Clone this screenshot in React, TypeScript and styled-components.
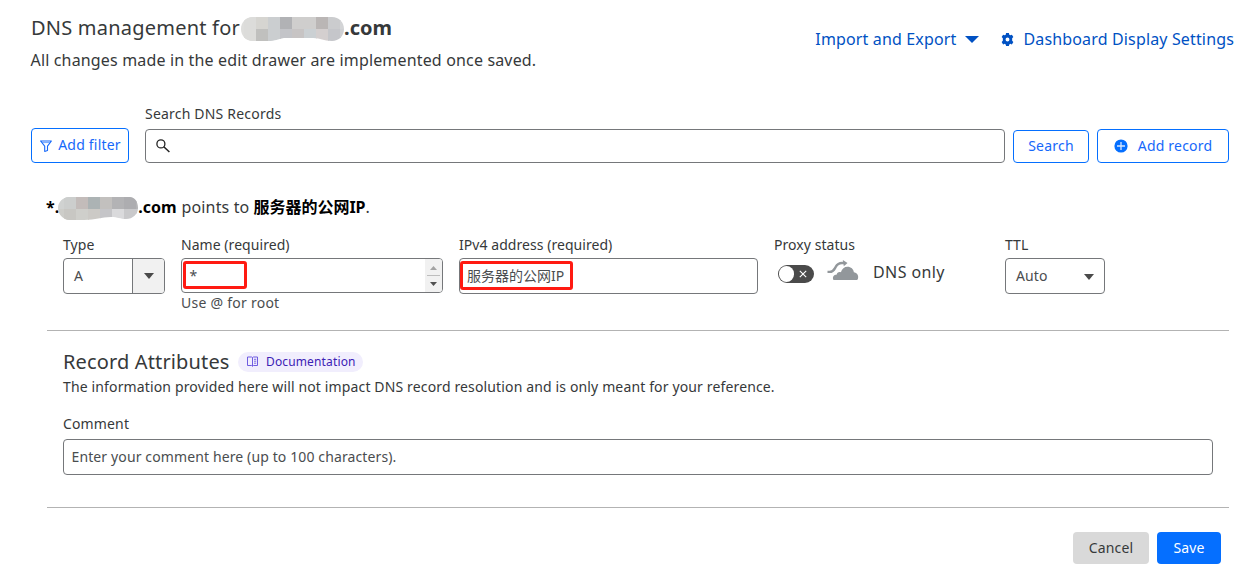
import React from "react";
import styled, { createGlobalStyle } from "styled-components";

const GlobalStyle = createGlobalStyle`
  *, *::before, *::after { box-sizing: border-box; }
  body {
    margin: 0;
    background: #fff;
    color: #36393a;
    font: 14px/20px "Noto Sans", "Noto Sans CJK SC", sans-serif;
    letter-spacing: 0.14px;
    white-space: nowrap;
    overflow: hidden;
  }
  svg { display: block; flex: none; }
`;

const Page = styled.main`
  width: 1258px;
  height: 570px;
  padding: 14px 24px 0 30px;
`;

const Header = styled.header`
  display: flex;
  justify-content: space-between;
  height: 90px;
`;

const Title = styled.h1`
  display: flex;
  align-items: center;
  margin: 0;
  padding-left: 1px;
  height: 28px;
  font-size: 20px;
  line-height: 28px;
  font-weight: 400;
  letter-spacing: 0.22px;
  strong { letter-spacing: 0; }
  svg { margin: 2px 0 0 1px; }
`;

const Subtitle = styled.p`
  margin: 6px 0 0;
  padding-left: 0.5px;
  font-size: 16px;
  line-height: 24px;
  letter-spacing: 0.16px;
`;

const HeaderLinks = styled.nav`
  display: flex;
  align-items: center;
  height: 24px;
  margin-top: 13px;
`;

const HeaderLink = styled.a<{ $gap: number }>`
  display: flex;
  align-items: center;
  gap: ${(p) => p.$gap}px;
  color: #0051c3;
  font-size: 16px;
  line-height: 24px;
  letter-spacing: 0.15px;
  & + & { margin-left: 22px; }
`;

const SearchRow = styled.section`
  display: flex;
  align-items: flex-end;
  height: 59px;
  padding-left: 1px;
`;

const OutlineButton = styled.button<{ $w: number; $h: number; $gap?: number }>`
  display: flex;
  align-items: center;
  justify-content: center;
  gap: ${(p) => p.$gap ?? 0}px;
  width: ${(p) => p.$w}px;
  height: ${(p) => p.$h}px;
  padding: 0;
  border: 1px solid #056fff;
  border-radius: 4px;
  background: #fff;
  color: #1668fa;
  font: inherit;
  letter-spacing: 0.2px;
`;

const FilterButton = styled(OutlineButton)`
  padding: 0 0 2px 1px;
  svg { margin-top: 3px; }
`;

const SearchButton = styled(OutlineButton)`
  padding-bottom: 2px;
`;

const AddButton = styled(OutlineButton)`
  margin-left: 8px;
`;

const SearchField = styled.label`
  display: flex;
  flex-direction: column;
  width: 860px;
  margin: 0 8px 0 16px;
  letter-spacing: 0.2px;
`;

const Box = styled.div<{ $w?: number; $h?: number; $pad?: number }>`
  position: relative;
  display: flex;
  align-items: center;
  width: ${(p) => (p.$w ? `${p.$w}px` : "100%")};
  height: ${(p) => p.$h ?? 36}px;
  padding-left: ${(p) => p.$pad ?? 7.5}px;
  border: 1px solid #75777a;
  border-radius: 4px;
  background: #fff;
  color: #4a4d4f;
  letter-spacing: 0.12px;
  overflow: hidden;
`;

const AddressBox = styled(Box)`
  letter-spacing: 0;
`;

const SearchBox = styled(Box)`
  margin-top: 5px;
`;

const Card = styled.section`
  width: 1182px;
  margin: 32px 0 0 17px;
`;

const Summary = styled.p`
  display: flex;
  align-items: center;
  height: 24px;
  margin: 0 0 0 -1px;
  font-size: 16px;
  line-height: 24px;
  strong { color: #000; letter-spacing: 0; }
  svg { margin: 2px 0 0 -1px; }
`;

const PointsTo = styled.span`
  margin: 0 4px 0 5px;
`;

const Fields = styled.div`
  display: flex;
  height: 96px;
  padding: 16px 0 0 16px;
`;

const Field = styled.div<{ $w: number; $gap?: number }>`
  display: flex;
  flex-direction: column;
  width: ${(p) => p.$w}px;
  margin-right: ${(p) => p.$gap ?? 16}px;
`;

const Label = styled.span`
  height: 23px;
  line-height: 20px;
  letter-spacing: 0.05px;
`;

const SelectArrow = styled.span`
  display: flex;
  align-items: center;
  justify-content: center;
  width: 32px;
  height: 100%;
  margin-left: auto;
  border-left: 1px solid #75777a;
  background: #f1f1f1;
`;

const PlainArrow = styled.span`
  margin: 2px 10px 0 auto;
`;

const Spinner = styled.span`
  display: flex;
  flex-direction: column;
  align-items: center;
  width: 17px;
  height: 100%;
  margin-left: auto;
  background: #f1f1f1;
`;

const SpinHalf = styled.span<{ $top?: boolean }>`
  display: flex;
  align-items: center;
  justify-content: center;
  width: 13px;
  height: 17px;
  padding-top: ${(p) => (p.$top ? 2 : 0)}px;
  border-bottom: ${(p) => (p.$top ? "1px solid #bdbdbd" : "0")};
`;

const Highlight = styled.span<{ $x: number; $y: number; $w: number; $h: number }>`
  position: absolute;
  left: ${(p) => p.$x}px;
  top: ${(p) => p.$y}px;
  width: ${(p) => p.$w}px;
  height: ${(p) => p.$h}px;
  border: 3px solid #ff1a12;
  border-radius: 3px;
`;

const Hint = styled.span`
  color: #4a4d4f;
  letter-spacing: 0.25px;
`;

const ProxyRow = styled.div`
  display: flex;
  align-items: center;
  height: 28px;
  padding-left: 4px;
  font-size: 16px;
  letter-spacing: 0.4px;
`;

const Toggle = styled.span`
  display: flex;
  align-items: center;
  justify-content: space-between;
  width: 36px;
  height: 18px;
  margin: 3px 13px 0 0;
  padding: 0 7px 0 1px;
  border-radius: 9px;
  background: #4a4a4a;
`;

const Knob = styled.span`
  width: 15px;
  height: 16px;
  border-radius: 8px;
  background: #fff;
`;

const ProxyLabel = styled.span`
  margin-left: 14px;
`;

const Divider = styled.hr`
  height: 1px;
  margin: 0;
  border: 0;
  background: #b3b3b3;
`;

const FieldsDivider = styled(Divider)`
  margin-top: 15px;
`;

const Attributes = styled.div`
  height: 176px;
  padding: 17px 16px 0;
`;

const AttributesHead = styled.div`
  display: flex;
  align-items: center;
  height: 28px;
`;

const SectionTitle = styled.h2`
  margin: 0;
  width: 175px;
  font-size: 20px;
  line-height: 28px;
  font-weight: 400;
`;

const DocPill = styled.a`
  display: flex;
  align-items: center;
  gap: 8px;
  width: 125px;
  height: 20px;
  margin-bottom: 1px;
  padding-left: 9px;
  border-radius: 10px;
  background: #f1eefd;
  color: #3c22b5;
  font-size: 12px;
`;

const Info = styled.p`
  height: 37px;
  margin: 1px 0 0;
`;

const CommentLabel = styled.div`
  height: 25px;
`;

const Actions = styled.footer`
  display: flex;
  justify-content: flex-end;
  gap: 8px;
  padding: 24px 8px 0 0;
`;

const ActionButton = styled.button<{ $w: number; $primary?: boolean }>`
  width: ${(p) => p.$w}px;
  height: 32px;
  padding: 0;
  border: 0;
  border-radius: 4px;
  background: ${(p) => (p.$primary ? "#056fff" : "#d9d9d9")};
  color: ${(p) => (p.$primary ? "#fff" : "#36393a")};
  font: inherit;
  letter-spacing: 0.15px;
`;

const Caret = ({ w, h, color, up }: { w: number; h: number; color: string; up?: boolean }) => (
  <svg width={w} height={h} viewBox="0 0 10 6" preserveAspectRatio="none" fill={color}>
    <path d={up ? "M0 6 5 0l5 6Z" : "M0 0h10L5 6Z"} />
  </svg>
);

const MaskedName = ({ id, width, height, first, outline, rows }: {
  id: string; width: number; height: number; first: number; outline: string; rows: string[][];
}) => (
  <svg width={width} height={height}>
    <clipPath id={id}><path d={outline} /></clipPath>
    <g clipPath={`url(#${id})`} shapeRendering="crispEdges">
      {rows.map((row, y) => row.map((fill, x) => (
        <rect key={`${x}-${y}`} x={x === 0 ? 0 : first + (x - 1) * 12} y={y * 12} width={12.5} height={12} fill={fill} />
      )))}
    </g>
  </svg>
);

const Gear = () => (
  <svg width="13" height="13" viewBox="0 0 12 12" fill="#0051c3">
    <path fillRule="evenodd" d="M4.700 0h2.600l.35 1.500.9.500 1.500-.5 1.350 2.250L10.300 4.900v2.200l1.100 1.150-1.350 2.250-1.500-.5-.9.500L7.300 12H4.700l-.35-1.500-.9-.500-1.500.5L.6 8.250 1.700 7.100V4.900L.6 3.750 1.950 1.500l1.500.5.9-.500ZM6 4.200a1.800 1.800 0 1 0 0 3.600 1.800 1.800 0 0 0 0-3.600Z" />
  </svg>
);

const Funnel = () => (
  <svg width="12" height="12" viewBox="0 0 12 12" fill="none" stroke="#1668fa" strokeWidth="1.1" strokeLinejoin="round">
    <path d="M.6 1h10.800L7.500 6.200v4.300l-2.800.900V6.200Z" />
    <path d="M2.200 2.600h7.600" strokeWidth=".6" />
  </svg>
);

const Magnifier = () => (
  <svg width="14" height="14" viewBox="0 0 14 14" fill="none" stroke="#222">
    <circle cx="4.900" cy="4.900" r="4" strokeWidth="1.300" />
    <path d="m7.800 7.800 5.600 5.200" strokeWidth="1.500" />
  </svg>
);

const PlusCircle = () => (
  <svg width="14" height="14" viewBox="0 0 14 14">
    <circle cx="7" cy="7" r="6.600" fill="#056fff" />
    <path d="M7 3v8M3 7h8" stroke="#d9e8ff" strokeWidth="1.300" />
  </svg>
);

const BypassIcon = styled.svg`
  margin-bottom: 3px;
`;

const CloudBypass = () => (
  <BypassIcon width="32" height="21" viewBox="0 0 32 21" fill="#92979b">
    <path d="M6.500 20C5 17.500 6.800 14.700 9.800 14.600 9.800 12.400 12 11.400 13.900 12.200 14.800 8.700 17.500 6.700 20.500 6.700 24 6.700 26.500 9 26.900 12.300 29.800 12.500 31.900 15.500 31 18.500 30.700 19.500 30.200 20 29.300 20Z" />
    <path d="M.5 11.900h2.300C6.500 11.900 7.200 9.400 8.700 6.900 10.200 4.200 12 3 15 3h2" fill="none" stroke="#92979b" strokeWidth="2.400" />
    <path d="M15.800 0 20.500 3 16.800 6.300Z" />
  </BypassIcon>
);

const Book = () => (
  <svg width="11" height="11" viewBox="0 0 11 11" fill="none" stroke="#6e5be0" strokeWidth="1">
    <path d="M.5 1h4.100l.9.500.9-.500h4.100v8.500H6.400l-.9.700-.9-.700H.5ZM5.500 1.500v8.700" />
    <path d="M7 3.300h2.200M7 5.200h2.200M7 7.200h2.200" strokeWidth=".9" />
  </svg>
);

const titleMask = [
  ["#dededc", "#dcdcda", "#d6d5d1", "#cbced0", "#b1b2b5", "#cfcecd", "#cfcecd", "#bab6b5", "#cbccce", "#d3d4d6"],
  ["#dededc", "#dcdcda", "#c0c0be", "#cbced0", "#c3c4c8", "#c7c4c4", "#cbd0d3", "#d4cfcf", "#c5c6ca", "#cfd0d3"],
];

const recordMask = [
  ["#d0d2d1", "#cccecd", "#c3bcba", "#acb3b4", "#c2c0be", "#b3b3b5", "#adadb0", "#b5b5b7"],
  ["#cdcdc9", "#c8c7c3", "#cfcfcb", "#cccac6", "#c5c5c8", "#dadadc", "#c9c9cb", "#c9c9cb"],
];

export default function App() {
  return (
    <Page>
      <GlobalStyle />
      <Header>
        <div>
          <Title>
            DNS management for
            <MaskedName id="title-mask" width={103} height={24} first={3} rows={titleMask}
              outline="M12 0H91C98 0 103 5 103 12S98 24 91 24C82 24 80 21 72 21H43C36 22 35 24 27 24H12C5 24 0 19 0 12S5 0 12 0Z" />
            <strong>.com</strong>
          </Title>
          <Subtitle>All changes made in the edit drawer are implemented once saved.</Subtitle>
        </div>
        <HeaderLinks>
          <HeaderLink $gap={9}>Import and Export<Caret w={14} h={7} color="#0051c3" /></HeaderLink>
          <HeaderLink $gap={9}><Gear />Dashboard Display Settings</HeaderLink>
        </HeaderLinks>
      </Header>

      <SearchRow>
        <FilterButton $w={98} $h={35} $gap={6}><Funnel />Add filter</FilterButton>
        <SearchField>
          <span>Search DNS Records</span>
          <SearchBox $h={34} $pad={10}><Magnifier /></SearchBox>
        </SearchField>
        <SearchButton $w={76} $h={33}>Search</SearchButton>
        <AddButton $w={132} $h={34} $gap={10}><PlusCircle />Add record</AddButton>
      </SearchRow>

      <Card>
        <Summary>
          <strong>*.</strong>
          <MaskedName id="record-mask" width={80} height={23} first={6} rows={recordMask}
            outline="M11 0H72C77 0 80 5 80 11S75 22 68 22C62 22 60 20 53 20C43 20 38 23 26 23H12C5 23 0 17 0 11S5 0 11 0Z" />
          <strong>.com</strong>
          <PointsTo>points to</PointsTo>
          <strong>服务器的公网IP</strong>.
        </Summary>

        <Fields>
          <Field $w={102}>
            <Label>Type</Label>
            <Box $w={102} $pad={10}>
              A<SelectArrow><Caret w={10} h={6} color="#4a4a4a" /></SelectArrow>
            </Box>
          </Field>
          <Field $w={262}>
            <Label>Name (required)</Label>
            <Box $h={35}>
              *
              <Spinner>
                <SpinHalf $top><Caret w={7} h={4} color="#a3a3a3" up /></SpinHalf>
                <SpinHalf><Caret w={7} h={4} color="#505050" /></SpinHalf>
              </Spinner>
              <Highlight $x={1} $y={2} $w={64} $h={28} />
            </Box>
            <Hint>Use @ for root</Hint>
          </Field>
          <Field $w={299}>
            <Label>IPv4 address (required)</Label>
            <AddressBox $pad={7}>
              服务器的公网IP
              <Highlight $x={0} $y={2} $w={113} $h={29} />
            </AddressBox>
          </Field>
          <Field $w={215}>
            <Label>Proxy status</Label>
            <ProxyRow>
              <Toggle>
                <Knob />
                <svg width="8" height="8" viewBox="0 0 8 8" stroke="#fff" strokeWidth="1.100"><path d="m.8.8 6.400 6.400M7.200.8.8 7.200" /></svg>
              </Toggle>
              <CloudBypass />
              <ProxyLabel>DNS only</ProxyLabel>
            </ProxyRow>
          </Field>
          <Field $w={100} $gap={0}>
            <Label>TTL</Label>
            <Box $pad={10}>
              Auto<PlainArrow><Caret w={10} h={6} color="#4a4a4a" /></PlainArrow>
            </Box>
          </Field>
        </Fields>

        <FieldsDivider />

        <Attributes>
          <AttributesHead>
            <SectionTitle>Record Attributes</SectionTitle>
            <DocPill><Book />Documentation</DocPill>
          </AttributesHead>
          <Info>The information provided here will not impact DNS record resolution and is only meant for your reference.</Info>
          <CommentLabel>Comment</CommentLabel>
          <Box>Enter your comment here (up to 100 characters).</Box>
        </Attributes>

        <Divider />

        <Actions>
          <ActionButton $w={76}>Cancel</ActionButton>
          <ActionButton $w={64} $primary>Save</ActionButton>
        </Actions>
      </Card>
    </Page>
  );
}
